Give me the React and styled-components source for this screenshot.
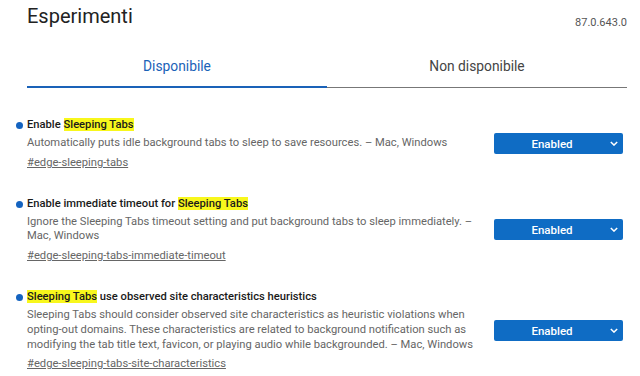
import styled, { createGlobalStyle } from 'styled-components';

const GlobalStyle = createGlobalStyle`
  body {
    margin: 0;
    background: #fff;
    font-family: Roboto, "Liberation Sans", sans-serif;
  }
`;

const experiments = [
  {
    title: [{ hl: false, text: 'Enable ' }, { hl: true, text: 'Sleeping Tabs' }],
    desc: 'Automatically puts idle background tabs to sleep to save resources. – Mac, Windows',
    tag: '#edge-sleeping-tabs',
  },
  {
    title: [{ hl: false, text: 'Enable immediate timeout for ' }, { hl: true, text: 'Sleeping Tabs' }],
    desc: 'Ignore the Sleeping Tabs timeout setting and put background tabs to sleep immediately. – Mac, Windows',
    tag: '#edge-sleeping-tabs-immediate-timeout',
  },
  {
    title: [{ hl: true, text: 'Sleeping Tabs' }, { hl: false, text: ' use observed site characteristics heuristics' }],
    desc: 'Sleeping Tabs should consider observed site characteristics as heuristic violations when opting-out domains. These characteristics are related to background notification such as modifying the tab title text, favicon, or playing audio while backgrounded. – Mac, Windows',
    tag: '#edge-sleeping-tabs-site-characteristics',
  },
];

const App = () => {
  return (
    <Page>
      <GlobalStyle />
      <Header>
        <Title>Esperimenti</Title>
        <Version>87.0.643.0</Version>
      </Header>
      <Tabs>
        <Tab active>Disponibile</Tab>
        <Tab>Non disponibile</Tab>
      </Tabs>
      <List>
        {experiments.map(exp => (
          <Experiment key={exp.tag}>
            <Info>
              <ExpTitle>
                {exp.title.map((part, i) =>
                  part.hl ? <Mark key={i}>{part.text}</Mark> : <span key={i}>{part.text}</span>
                )}
              </ExpTitle>
              <Desc>{exp.desc}</Desc>
              <Tag href="#">{exp.tag}</Tag>
            </Info>
            <Select>
              <span>Enabled</span>
              <Chevron viewBox="0 0 10 6">
                <path d="M1 1l4 4 4-4" fill="none" stroke="#fff" strokeWidth="1.8" />
              </Chevron>
            </Select>
          </Experiment>
        ))}
      </List>
    </Page>
  );
};

export default App;

const Page = styled.div`
  padding: 0 13px 0 27px;
`;

const Header = styled.header`
  display: flex;
  justify-content: space-between;
  align-items: flex-end;
  height: 28px;
`;

const Title = styled.h1`
  margin: 0;
  font-size: 20px;
  font-weight: 400;
  color: #222;
  line-height: 28px;
  align-self: flex-start;
  margin-top: 2px;
`;

const Version = styled.span`
  font-size: 11px;
  color: #555;
  margin-bottom: -1px;
`;

const Tabs = styled.nav`
  display: grid;
  grid-template-columns: 1fr 1fr;
  margin-top: 18px;
`;

const Tab = styled.div`
  text-align: center;
  font-size: 13.8px;
  height: 42px;
  line-height: 40px;
  color: ${p => (p.active ? '#1a62b8' : '#444')};
  border-bottom: ${p => (p.active ? '2px solid #1a62b8' : '1px solid #777')};
  box-sizing: border-box;
  margin-bottom: ${p => (p.active ? '0' : '1px')};
`;

const List = styled.div`
  display: flex;
  flex-direction: column;
  gap: 25px;
  margin-top: 28px;
  margin-right: 4px;
`;

const Experiment = styled.section`
  display: grid;
  grid-template-columns: 1fr 129px;
  align-items: center;
  gap: 19px;
`;

const Info = styled.div`
  position: relative;

  &::before {
    content: '';
    position: absolute;
    left: -11px;
    top: 5px;
    width: 7px;
    height: 7px;
    border-radius: 50%;
    background: #1463c0;
  }
`;

const ExpTitle = styled.div`
  font-size: 11.2px;
  font-weight: 500;
  color: #1a1a1a;
  line-height: 16px;
`;

const Mark = styled.span`
  background: #f8f71c;
`;

const Desc = styled.p`
  margin: 3px 0 0;
  font-size: 11.2px;
  line-height: 14.7px;
  color: #666;
`;

const Tag = styled.a`
  display: inline-block;
  margin-top: 1px;
  font-size: 11.2px;
  line-height: 16px;
  color: #666;
  text-decoration: underline;
`;

const Select = styled.div`
  display: flex;
  align-items: center;
  justify-content: center;
  position: relative;
  height: 21px;
  padding-right: 13px;
  background: #0f6cc4;
  border-radius: 2px;
  color: #fff;
  font-size: 11.5px;
  font-weight: 500;
`;

const Chevron = styled.svg`
  position: absolute;
  right: 5px;
  top: 8px;
  width: 8px;
  height: 5px;
`;
